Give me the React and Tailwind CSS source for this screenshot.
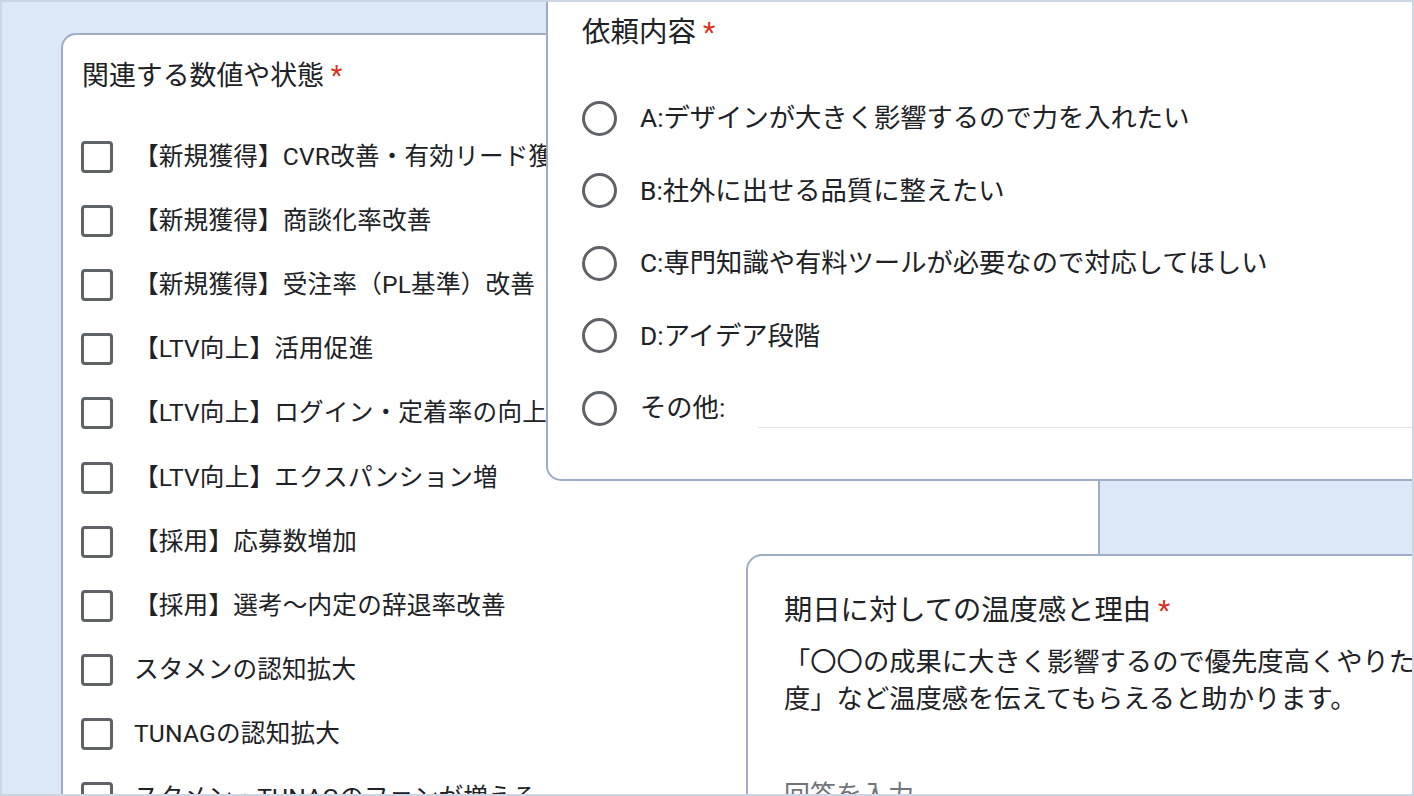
import React from "react";

const checkItems = [
  "【新規獲得】CVR改善・有効リード獲得",
  "【新規獲得】商談化率改善",
  "【新規獲得】受注率（PL基準）改善",
  "【LTV向上】活用促進",
  "【LTV向上】ログイン・定着率の向上",
  "【LTV向上】エクスパンション増",
  "【採用】応募数増加",
  "【採用】選考〜内定の辞退率改善",
  "スタメンの認知拡大",
  "TUNAGの認知拡大",
  "スタメン・TUNAGのファンが増える",
];

const radioItems = [
  "A:デザインが大きく影響するので力を入れたい",
  "B:社外に出せる品質に整えたい",
  "C:専門知識や有料ツールが必要なので対応してほしい",
  "D:アイデア段階",
];

function Req() {
  return <span className="text-[#d93025]"> *</span>;
}

export default function App() {
  return (
    <div className="relative w-[1414px] h-[796px] overflow-hidden bg-[#dce8f8] border-2 border-[#ccd6e3] font-[Roboto,'Noto_Sans_CJK_JP',sans-serif] text-[#202124]">
      {/* Card 1 */}
      <div className="absolute left-[59px] top-[31px] w-[1039px] h-[830px] bg-white border-2 border-[#9eadc4] rounded-[15px] pl-[18px] pt-[23px]">
        <div className="ml-px h-[36px] leading-[36px] text-[26.9px] whitespace-nowrap">
          関連する数値や状態<Req />
        </div>
        <div className="mt-[31px] flex flex-col">
          {checkItems.map((t) => (
            <div key={t} className="h-[64.1px] flex items-center whitespace-nowrap">
              <div className="w-[32px] h-[32px] shrink-0 rounded-[4px] border-[3px] border-[#5f6368]" />
              <span className="ml-[21px] text-[24.6px] leading-[32px] tracking-[0.2px]">{t}</span>
            </div>
          ))}
        </div>
      </div>

      {/* Card 2 */}
      <div className="absolute left-[544px] top-[-40px] w-[900px] h-[519px] bg-white border-2 border-[#9eadc4] rounded-[15px] pl-[34px] pt-[49px]">
        <div className="h-[40px] leading-[40px] text-[28.5px] whitespace-nowrap">
          依頼内容<Req />
        </div>
        <div className="mt-[29px] flex flex-col">
          {radioItems.map((t) => (
            <div key={t} className="h-[72.5px] flex items-center whitespace-nowrap">
              <div className="w-[35px] h-[35px] shrink-0 rounded-full border-[3px] border-[#5f6368]" />
              <span className="ml-[23px] text-[26.3px] leading-[34px]">{t}</span>
            </div>
          ))}
          <div className="h-[72.5px] flex items-center whitespace-nowrap">
            <div className="w-[35px] h-[35px] shrink-0 rounded-full border-[3px] border-[#5f6368]" />
            <span className="ml-[23px] text-[26.3px] leading-[34px]">その他:</span>
            <div className="ml-[33px] flex-1 h-[39px] border-b-[1.5px] border-[#e3e3e3]" />
          </div>
        </div>
      </div>

      {/* Card 3 */}
      <div className="absolute left-[744px] top-[552px] w-[700px] h-[300px] bg-white border-2 border-[#9eadc4] rounded-[16px] pl-[36px] pt-[35px]">
        <div className="h-[40px] leading-[40px] text-[28.3px] whitespace-nowrap">
          期日に対しての温度感と理由<Req />
        </div>
        <div className="mt-[13px] text-[26.3px] leading-[36px] whitespace-nowrap">
          <div>「〇〇の成果に大きく影響するので優先度高くやりたい」「いつでも良い程</div>
          <div className="mt-px">度」など温度感を伝えてもらえると助かります。</div>
        </div>
        <div className="mt-[60px] text-[26px] leading-[36px] text-[#70757a] whitespace-nowrap">
          回答を入力
        </div>
      </div>
    </div>
  );
}
